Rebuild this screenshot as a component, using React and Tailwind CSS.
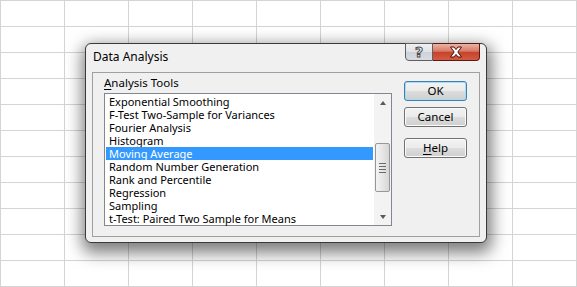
const items = [
  "Exponential Smoothing",
  "F-Test Two-Sample for Variances",
  "Fourier Analysis",
  "Histogram",
  "Moving Average",
  "Random Number Generation",
  "Rank and Percentile",
  "Regression",
  "Sampling",
  "t-Test: Paired Two Sample for Means",
];

function WinButton({ children, primary }) {
  return (
    <div
      className={
        "w-[63px] h-[20px] rounded-[3px] border flex items-center justify-center text-[11.5px] leading-none text-black bg-[linear-gradient(to_bottom,#f2f2f2_0%,#ebebeb_50%,#dddddd_50%,#cfcfcf_100%)] " +
        (primary
          ? "border-[#3c7fb1] shadow-[inset_0_0_0_1px_#a8dcf5]"
          : "border-[#707070] shadow-[inset_0_0_0_1px_#fbfbfb]")
      }
    >
      {children}
    </div>
  );
}

export default function App() {
  return (
    <div className="relative w-[577px] h-[287px] overflow-hidden bg-white font-['Noto_Sans',sans-serif]">
      <div className="grid grid-cols-[repeat(9,64px)] auto-rows-[26px] border-l border-t border-[#d4d4d4]">
        {Array.from({ length: 108 }).map((_, i) => (
          <div key={i} className="border-r border-b border-[#d4d4d4]" />
        ))}
      </div>

      <div className="absolute left-[85px] top-[43px] w-[402px] h-[200px] rounded-[6px] border border-[#3a3a3a] bg-[#f0f0f0] shadow-[1px_6px_16px_4px_rgba(0,0,0,0.5)] flex flex-col">
        {/* title bar */}
        <div className="h-[28px] flex justify-between items-start">
          <div className="pl-[7px] pt-[6px] text-[12px] leading-[14px] text-black">Data Analysis</div>
          <div className="flex mr-[6px] -mt-px">
            <div className="w-[28px] h-[18px] rounded-bl-[4px] border border-[#5f5f5f] bg-[linear-gradient(to_bottom,#eef0f2_0%,#dfe2e6_50%,#cdd2d8_51%,#d9dde2_100%)] flex items-center justify-center">
              <span className="text-[14px] leading-none font-bold text-[#f7f7f7] [-webkit-text-stroke:1px_#4a4a4a] font-['DejaVu_Sans',sans-serif]">?</span>
            </div>
            <div className="w-[47px] h-[18px] rounded-br-[4px] border border-l-0 border-[#5a1a12] bg-[linear-gradient(to_bottom,#eab3a5_0%,#d97a66_45%,#c7432e_52%,#d45a42_100%)] flex items-center justify-center">
              <svg width="14" height="12" viewBox="0 0 14 12">
                <path
                  d="M1.5 1 H5 L7 3.6 L9 1 H12.5 L8.8 6 L12.5 11 H9 L7 8.4 L5 11 H1.5 L5.2 6 Z"
                  fill="#ffffff"
                  stroke="#4a1208"
                  strokeWidth="1"
                  strokeLinejoin="round"
                />
              </svg>
            </div>
          </div>
        </div>

        {/* frame */}
        <div className="mx-[6px] h-[165px] border border-[#a0a0a0] flex">
          <div className="pl-[11px] pt-[3px] flex flex-col">
            <div className="h-[14px] text-[11.5px] leading-[14px] text-black">
              <span className="underline underline-offset-2">A</span>nalysis Tools
            </div>
            <div className="mt-[3px] w-[288px] h-[133px] border border-[#828790] bg-white flex">
              <div className="flex-1 p-[1px] flex flex-col">
                {items.map((t) => (
                  <div
                    key={t}
                    className={
                      "h-[13px] pl-[3px] text-[11px] leading-[13px] whitespace-nowrap " +
                      (t === "Moving Average" ? "bg-[#3399ff] text-white" : "text-black")
                    }
                  >
                    {t}
                  </div>
                ))}
              </div>
              <div className="w-[17px] bg-[#f3f3f3] flex flex-col">
                <div className="h-[17px] flex items-center justify-center">
                  <div className="w-0 h-0 border-l-[3.5px] border-r-[3.5px] border-b-[4px] border-l-transparent border-r-transparent border-b-[#5a5a5a]" />
                </div>
                <div className="flex-1 flex flex-col">
                  <div className="mt-[32px] ml-[1px] w-[15px] h-[49px] rounded-[2px] border border-[#979797] bg-[linear-gradient(to_right,#f3f3f3,#e6e6e6_50%,#d6d6d6)] flex flex-col items-center justify-center gap-[2px]">
                    <div className="w-[7px] h-px bg-[#6a6a6a]" />
                    <div className="w-[7px] h-px bg-[#6a6a6a]" />
                    <div className="w-[7px] h-px bg-[#6a6a6a]" />
                    <div className="w-[7px] h-px bg-[#6a6a6a]" />
                  </div>
                </div>
                <div className="h-[17px] flex items-center justify-center">
                  <div className="w-0 h-0 border-l-[3.5px] border-r-[3.5px] border-t-[4px] border-l-transparent border-r-transparent border-t-[#5a5a5a]" />
                </div>
              </div>
            </div>
          </div>
          <div className="ml-[12px] pt-[8px] flex flex-col">
            <WinButton primary>OK</WinButton>
            <div className="mt-[6px]">
              <WinButton>Cancel</WinButton>
            </div>
            <div className="mt-[11px]">
              <WinButton>
                <span>
                  <span className="underline underline-offset-2">H</span>elp
                </span>
              </WinButton>
            </div>
          </div>
        </div>
      </div>
    </div>
  );
}
